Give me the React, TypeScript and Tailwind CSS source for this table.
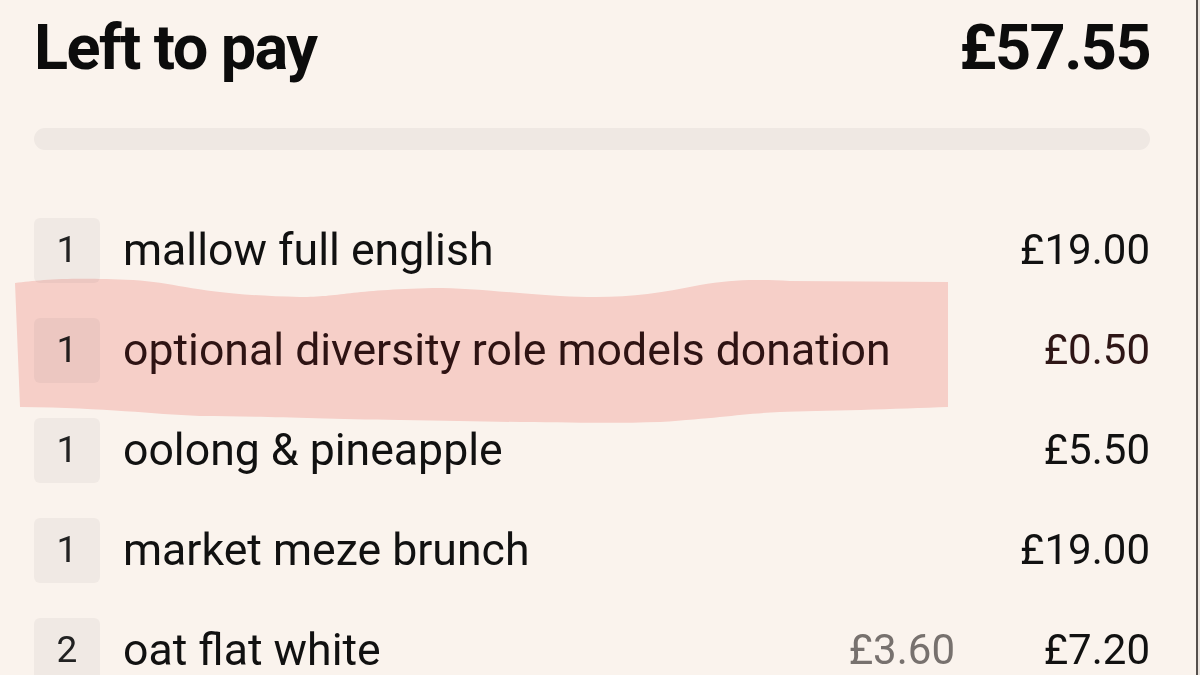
import React from 'react';

type Item = {
  qty: number;
  name: string;
  total: string;
  unit?: string;
  marked?: boolean;
};

const items: Item[] = [
  { qty: 1, name: 'mallow full english', total: '£19.00' },
  { qty: 1, name: 'optional diversity role models donation', total: '£0.50', marked: true },
  { qty: 1, name: 'oolong & pineapple', total: '£5.50' },
  { qty: 1, name: 'market meze brunch', total: '£19.00' },
  { qty: 2, name: 'oat flat white', unit: '£3.60', total: '£7.20' },
];

// hand-drawn marker stroke over the donation line
function Highlight() {
  return (
    <svg
      className="pointer-events-none absolute left-0 top-0 mix-blend-multiply"
      width="1200"
      height="675"
      viewBox="0 0 1200 675"
    >
      <path
        d="M15,283 C40,280 67,277 133,280 C180,283 200,295 300,297 C340,297 350,290 433,288 C470,288 500,292 560,296 C620,299 650,295 700,285 C730,280 750,279 790,281 L948,282 L948,407 C900,409 820,411 780,412 C740,414 720,418 660,422 C600,424 520,422 400,420 C300,418 250,416 200,416 C150,414 110,408 20,407 Z"
        fill="#fbdad8"
      />
    </svg>
  );
}

export default function App() {
  return (
    <div className="h-[675px] w-[1200px] overflow-hidden bg-[#e9e3de] pr-[2px] font-['Roboto',sans-serif]">
      <div className="relative h-full border-r-2 border-[#55504d] bg-[#faf3ed] pl-[34px] pr-[46px]">
        <div className="flex items-baseline justify-between pt-[16px] text-[63px] font-bold leading-none tracking-[-0.025em] text-[#0c0c0c]">
          <h1>Left to pay</h1>
          <span>£57.55</span>
        </div>

        <div className="mt-[49px] h-[22px] rounded-full bg-[#efe8e3]" />

        <ul className="mt-[50px]">
          {items.map((item, i) => (
            <li key={i} className="flex h-[100px] items-center">
              <div className="flex h-[65px] w-[66px] shrink-0 items-center justify-center rounded-md bg-[#f0e9e4] text-[37px] text-[#222]">
                {item.qty}
              </div>
              <div
                className={
                  'ml-[23px] flex-1 text-[44.6px] leading-none ' +
                  (item.marked ? 'text-[#2e1616]' : 'text-[#111]')
                }
              >
                {item.name}
              </div>
              {item.unit && (
                <div className="text-[42px] leading-none text-[#77716e]">{item.unit}</div>
              )}
              <div
                className={
                  'w-[195px] text-right text-[42px] leading-none ' +
                  (item.marked ? 'text-[#2e1616]' : 'text-[#111]')
                }
              >
                {item.total}
              </div>
            </li>
          ))}
        </ul>

        <Highlight />
      </div>
    </div>
  );
}
